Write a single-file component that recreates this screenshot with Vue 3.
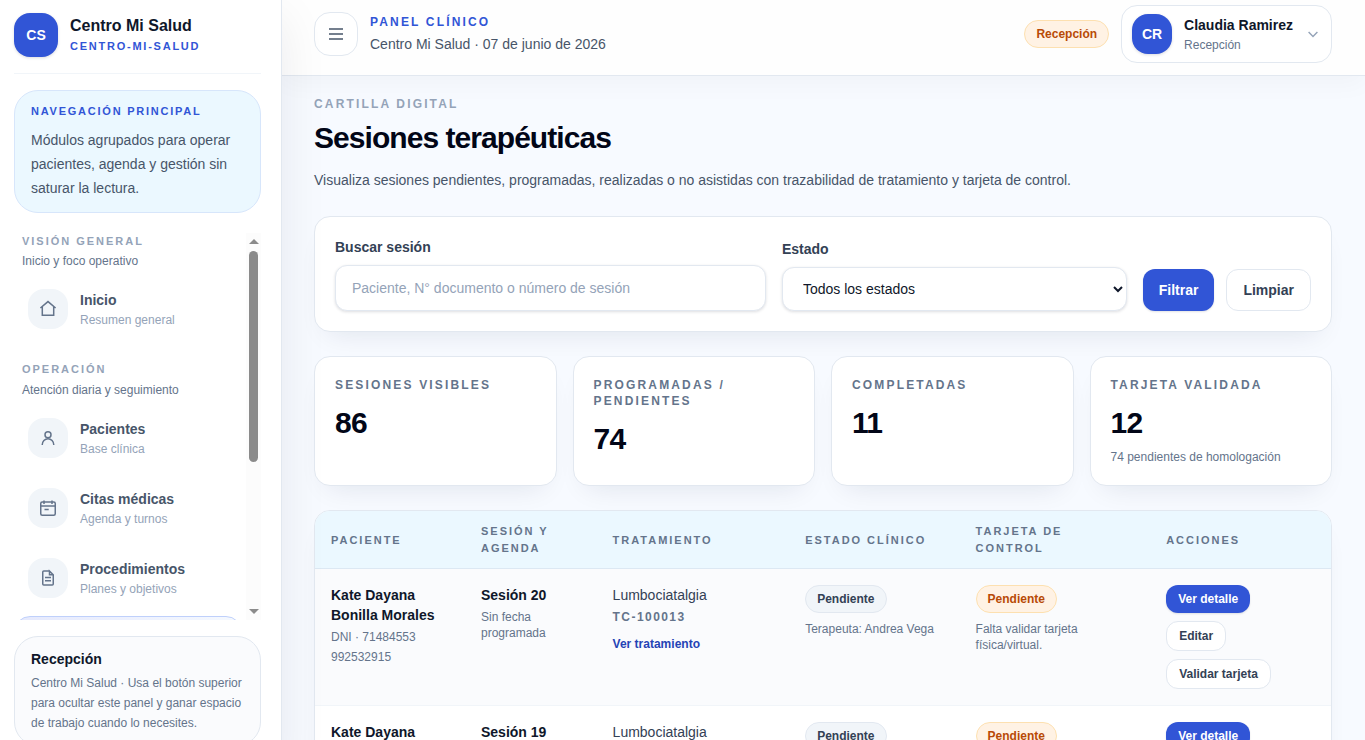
<template>
    <div class="layout">
        <aside class="sidebar">
            <div class="brand">
                <div class="brand-logo">CS</div>
                <div class="brand-text">
                    <div class="brand-name">Centro Mi Salud</div>
                    <div class="brand-slug">centro-mi-salud</div>
                </div>
            </div>
            
            <div class="nav-intro">
                <div class="nav-intro-title">Navegación principal</div>
                <p>Módulos agrupados para operar pacientes, agenda y gestión sin saturar la lectura.</p>
            </div>
            
            <div class="nav-wrapper">
                <nav class="nav">
                    <section v-for="group in navGroups" :key="group.title" class="nav-group">
                        <div class="nav-group-title">{{ group.title }}</div>
                        <div class="nav-group-text">{{ group.text }}</div>
                        <div class="nav-items">
                            <a v-for="item in group.items"
                               :key="item.name"
                               :class="['nav-item', { active: item.name === activeItem }]"
                               @click="activeItem = item.name"
                            >
                                <span class="nav-icon">
                                    <svg viewBox="0 0 20 20"><path :d="item.icon"/></svg>
                                </span>
                                <span v-if="item.name !== activeItem">
                                    <span class="nav-name">{{ item.name }}</span>
                                    <span class="nav-text">{{ item.text }}</span>
                                </span>
                            </a>
                        </div>
                    </section>
                </nav>
                <div class="scrollbar">
                    <i class="arrow-up"></i>
                    <div class="scroll-thumb"></div>
                    <i class="arrow-down"></i>
                </div>
            </div>
            
            <div class="sidebar-footer">
                <strong>Recepción</strong>
                <p>Centro Mi Salud · Usa el botón superior para ocultar este panel y ganar espacio de trabajo cuando lo necesites.</p>
            </div>
        </aside>
        
        <div class="main">
            <header class="topbar">
                <button class="menu-btn">
                    <svg viewBox="0 0 20 20"><path d="M3 5h14M3 10h14M3 15h14"/></svg>
                </button>
                <div class="topbar-title">
                    <div class="topbar-label">Panel clínico</div>
                    <div class="topbar-date">Centro Mi Salud · 07 de junio de 2026</div>
                </div>
                <span class="pill pill-warning">Recepción</span>
                <div class="user-card">
                    <div class="user-avatar">CR</div>
                    <div>
                        <div class="user-name">Claudia Ramirez</div>
                        <div class="user-role">Recepción</div>
                    </div>
                    <svg viewBox="0 0 20 20"><path d="m4.5 7.5 5.5 5.5 5.5-5.5"/></svg>
                </div>
            </header>
            
            <main class="content">
                <div class="page-label">Cartilla digital</div>
                <h1>Sesiones terapéuticas</h1>
                <p class="page-text">
                    Visualiza sesiones pendientes, programadas, realizadas o no asistidas con trazabilidad de tratamiento y tarjeta de control.
                </p>
                
                <form class="card filters" @submit.prevent>
                    <label>
                        Buscar sesión
                        <input v-model="search" type="text" placeholder="Paciente, N° documento o número de sesión"/>
                    </label>
                    <label>
                        Estado
                        <select v-model="status">
                            <option value="">Todos los estados</option>
                            <option value="pendiente">Pendiente</option>
                            <option value="programada">Programada</option>
                            <option value="realizada">Realizada</option>
                        </select>
                    </label>
                    <div class="filter-actions">
                        <button class="btn btn-primary">Filtrar</button>
                        <button type="button" class="btn btn-secondary" @click="clearFilters">Limpiar</button>
                    </div>
                </form>
                
                <div class="stats">
                    <div v-for="stat in stats" :key="stat.label" class="card stat">
                        <div class="stat-label">{{ stat.label }}</div>
                        <div class="stat-value">{{ stat.value }}</div>
                        <div v-if="stat.note" class="stat-note">{{ stat.note }}</div>
                    </div>
                </div>
                
                <div class="card table-card">
                    <table>
                        <colgroup>
                            <col class="col-patient"/>
                            <col class="col-session"/>
                            <col class="col-treatment"/>
                            <col class="col-status"/>
                            <col class="col-control"/>
                            <col/>
                        </colgroup>
                        <thead>
                            <tr>
                                <th>Paciente</th>
                                <th>Sesión y agenda</th>
                                <th>Tratamiento</th>
                                <th>Estado clínico</th>
                                <th>Tarjeta de control</th>
                                <th>Acciones</th>
                            </tr>
                        </thead>
                        <tbody>
                            <tr v-for="row in sessions" :key="row.number">
                                <td>
                                    <div class="strong">Kate Dayana Bonilla Morales</div>
                                    <div class="small">DNI · 71484553</div>
                                    <div class="small">992532915</div>
                                </td>
                                <td>
                                    <div class="strong">Sesión {{ row.number }}</div>
                                    <div class="small">Sin fecha programada</div>
                                </td>
                                <td>
                                    <div>Lumbociatalgia</div>
                                    <div class="small code">TC-100013</div>
                                    <a class="link">Ver tratamiento</a>
                                </td>
                                <td>
                                    <span class="pill">Pendiente</span>
                                    <div class="small under-pill">Terapeuta: Andrea Vega</div>
                                </td>
                                <td>
                                    <span class="pill pill-warning">Pendiente</span>
                                    <div class="small under-pill">Falta validar tarjeta física/virtual.</div>
                                </td>
                                <td>
                                    <div class="row-actions">
                                        <button class="btn btn-small btn-primary">Ver detalle</button>
                                        <button class="btn btn-small btn-secondary">Editar</button>
                                        <button class="btn btn-small btn-secondary">Validar tarjeta</button>
                                    </div>
                                </td>
                            </tr>
                        </tbody>
                    </table>
                </div>
            </main>
        </div>
    </div>
</template>

<script setup>
    import { ref } from 'vue';
    
    const search = ref('');
    const status = ref('');
    const activeItem = ref('Sesiones');
    
    // Menú lateral
    const docIcon = 'M11.5 3H5.75a1 1 0 0 0-1 1v12a1 1 0 0 0 1 1h8.5a1 1 0 0 0 1-1V6.75L11.5 3v3.75h3.75M7 9.5h6M7 12.7h6';
    
    const navGroups = [
        {
            title: 'Visión general',
            text: 'Inicio y foco operativo',
            items: [
                {name: 'Inicio', text: 'Resumen general', icon: 'M2.4 9 10 2.6 17.6 9M4.3 7.6v8.7h11.4V7.6'}
            ]
        },
        {
            title: 'Operación',
            text: 'Atención diaria y seguimiento',
            items: [
                {name: 'Pacientes', text: 'Base clínica', icon: 'M13 6.8a3 3 0 1 1-6 0 3 3 0 0 1 6 0M4.2 17a5.8 6.3 0 0 1 11.6 0'},
                {name: 'Citas médicas', text: 'Agenda y turnos', icon: 'M6 2.5V6M14 2.5V6M2.75 7.9h14.5M4.25 4h11.5a1.5 1.5 0 0 1 1.5 1.5v10.2a1.5 1.5 0 0 1-1.5 1.5H4.25a1.5 1.5 0 0 1-1.5-1.5V5.5a1.5 1.5 0 0 1 1.5-1.5M6.5 11.4h4.2'},
                {name: 'Procedimientos', text: 'Planes y objetivos', icon: docIcon},
                {name: 'Sesiones', text: 'Cartilla digital', icon: docIcon}
            ]
        }
    ];
    
    const stats = [
        {label: 'Sesiones visibles', value: 86},
        {label: 'Programadas / pendientes', value: 74},
        {label: 'Completadas', value: 11},
        {label: 'Tarjeta validada', value: 12, note: '74 pendientes de homologación'}
    ];
    
    const sessions = [
        {number: 20},
        {number: 19}
    ];
    
    const clearFilters = () => {
        search.value = '';
        status.value = '';
    };
</script>

<style>
    body {
        margin: 0;
        overflow: hidden;
    }
</style>

<style scoped>
    * {
        box-sizing: border-box;
    }
    
    .layout {
        display: flex;
        height: 740px;
        overflow: hidden;
        background: #f7faff;
        color: #334155;
        font-family: "Liberation Sans", Arial, sans-serif;
        font-size: 14px;
        line-height: 20px;
    }
    
    p, h1 {
        margin: 0;
    }
    
    button, input, select {
        font-family: inherit;
    }
    
    svg {
        display: block;
        width: 20px;
        height: 20px;
        fill: none;
        stroke: currentColor;
        stroke-width: 1.5;
    }
    
    /* Sidebar */
    .sidebar {
        position: relative;
        z-index: 2;
        display: flex;
        flex-direction: column;
        flex: 0 0 282px;
        height: 759px;
        padding: 13px 20px 13px 14px;
        border-right: 1px solid #e2e8f0;
        background: #fff;
        box-shadow: 0 18px 45px rgba(15, 23, 42, 0.08);
    }
    
    .brand {
        display: flex;
        align-items: center;
        gap: 12px;
        padding-bottom: 16px;
        border-bottom: 1px solid #f1f5f9;
    }
    
    .brand-logo,
    .user-avatar {
        display: flex;
        align-items: center;
        justify-content: center;
        border-radius: 16px;
        background: #3155d6;
        color: #fff;
        font-weight: 700;
        box-shadow: 0 1px 3px rgba(15, 23, 42, 0.15);
    }
    
    .brand-logo {
        width: 44px;
        height: 44px;
    }
    
    .brand-text {
        padding-bottom: 2px;
    }
    
    .brand-name {
        color: #0f172a;
        font-size: 16px;
        font-weight: 700;
        line-height: 24px;
    }
    
    .brand-slug,
    .nav-intro-title {
        color: #3155d6;
        font-size: 11px;
        font-weight: 700;
        line-height: 16.5px;
        letter-spacing: 1.76px;
        text-transform: uppercase;
    }
    
    .nav-intro {
        margin-top: 16px;
        padding: 12px 16px;
        border: 1px solid #d7e6fb;
        border-radius: 24px;
        background: #ebf8ff;
    }
    
    .nav-intro p {
        margin-top: 8px;
        color: #475569;
        line-height: 24px;
    }
    
    .nav-wrapper {
        display: flex;
        flex: 1;
        gap: 4px;
        min-height: 0;
        margin: 20px 0 16px;
    }
    
    .nav {
        flex: 1;
        overflow: hidden;
    }
    
    .nav-group + .nav-group {
        margin-top: 20px;
    }
    
    .nav-group-title {
        padding: 0 8px;
        color: #94a3b8;
        font-size: 11px;
        font-weight: 700;
        line-height: 16.5px;
        letter-spacing: 1.98px;
        text-transform: uppercase;
    }
    
    .nav-group-text {
        margin: 4px 0 8px;
        padding: 0 8px;
        color: #64748b;
        font-size: 12px;
        line-height: 16px;
    }
    
    .nav-items {
        display: flex;
        flex-direction: column;
        gap: 6px;
    }
    
    .nav-item {
        display: flex;
        align-items: center;
        gap: 12px;
        padding: 11px 13px;
        border: 1px solid transparent;
        border-radius: 16px;
        cursor: pointer;
    }
    
    .nav-item.active {
        border-color: #bfd0fb;
        background: linear-gradient(90deg, #e5e9fd, #f5f9ff);
    }
    
    .nav-icon {
        display: flex;
        align-items: center;
        justify-content: center;
        width: 40px;
        height: 40px;
        border-radius: 16px;
        background: #f1f5f9;
        color: #64748b;
    }
    
    .nav-name,
    .nav-text {
        display: block;
    }
    
    .nav-name {
        color: #475569;
        font-weight: 700;
    }
    
    .nav-text {
        margin-top: 2px;
        color: #94a3b8;
        font-size: 12px;
        line-height: 16px;
    }
    
    .scrollbar {
        display: flex;
        flex-direction: column;
        align-items: center;
        width: 15px;
        padding: 6px 0;
        background: #fcfcfc;
    }
    
    .arrow-up,
    .arrow-down {
        border: 5px solid transparent;
    }
    
    .arrow-up {
        border-top: 0;
        border-bottom-color: #8b8b8b;
    }
    
    .arrow-down {
        margin-top: auto;
        border-bottom: 0;
        border-top-color: #8b8b8b;
    }
    
    .scroll-thumb {
        width: 9px;
        height: 211px;
        margin-top: 7px;
        border-radius: 5px;
        background: #8b8b8b;
    }
    
    .sidebar-footer {
        padding: 12px 16px;
        border: 1px solid #e2e8f0;
        border-radius: 24px;
        background: #fafbfd;
    }
    
    .sidebar-footer strong {
        color: #0f172a;
    }
    
    .sidebar-footer p {
        margin-top: 4px;
        color: #64748b;
        font-size: 12px;
    }
    
    /* Topbar */
    .main {
        flex: 1;
        min-width: 0;
    }
    
    .topbar {
        display: flex;
        align-items: center;
        gap: 12px;
        height: 76px;
        padding: 5px 33px 12px 32px;
        border-bottom: 1px solid #e2e8f0;
        background: #fefefe;
        box-shadow: 0 8px 24px rgba(15, 23, 42, 0.03);
    }
    
    .menu-btn {
        display: flex;
        align-items: center;
        justify-content: center;
        width: 44px;
        height: 44px;
        padding: 0;
        border: 1px solid #e2e8f0;
        border-radius: 16px;
        background: #fff;
        color: #475569;
    }
    
    .topbar-title {
        flex: 1;
    }
    
    .topbar-label {
        color: #3155d6;
        font-size: 12px;
        font-weight: 700;
        line-height: 16px;
        letter-spacing: 2.16px;
        text-transform: uppercase;
    }
    
    .topbar-date {
        margin-top: 4px;
        color: #475569;
    }
    
    .pill {
        display: inline-block;
        padding: 5px 11px;
        border: 1px solid #e2e8f0;
        border-radius: 14px;
        background: #f1f5f9;
        color: #334155;
        font-size: 12px;
        font-weight: 700;
        line-height: 16px;
        vertical-align: top;
    }
    
    .pill-warning {
        border-color: #fde0b0;
        background: #fff2e4;
        color: #b84a06;
    }
    
    .user-card {
        display: flex;
        align-items: center;
        gap: 12px;
        height: 58px;
        padding: 0 10px;
        border: 1px solid #e2e8f0;
        border-radius: 16px;
        background: #fff;
    }
    
    .user-card svg {
        width: 16px;
        height: 16px;
        color: #94a3b8;
        stroke-width: 1.8;
    }
    
    .user-avatar {
        width: 40px;
        height: 40px;
    }
    
    .user-name {
        color: #0f172a;
        font-weight: 700;
    }
    
    .user-role {
        margin-top: 2px;
        color: #64748b;
        font-size: 12px;
        line-height: 16px;
    }
    
    /* Content */
    .content {
        padding: 20px 33px 0 32px;
    }
    
    .page-label {
        color: #94a3b8;
        font-size: 12px;
        font-weight: 700;
        line-height: 16px;
        letter-spacing: 2.16px;
        text-transform: uppercase;
    }
    
    h1 {
        margin-top: 8px;
        color: #020617;
        font-size: 30px;
        line-height: 36px;
        letter-spacing: -0.95px;
    }
    
    .page-text {
        margin-top: 12px;
        color: #475569;
        line-height: 24px;
    }
    
    .card {
        border: 1px solid #e2e8f0;
        border-radius: 16px;
        background: #fff;
        box-shadow: 0 14px 28px -14px rgba(15, 23, 60, 0.11);
    }
    
    .filters {
        display: grid;
        grid-template-columns: minmax(0, 1.25fr) minmax(0, 1fr) auto;
        align-items: end;
        gap: 16px;
        margin-top: 24px;
        padding: 20px;
    }
    
    .filters label {
        color: #334155;
        font-weight: 700;
    }
    
    .filters input,
    .filters select {
        display: block;
        width: 100%;
        height: 46px;
        margin-top: 8px;
        padding: 0 16px;
        border: 1px solid #e2e8f0;
        border-radius: 12px;
        background: #fff;
        color: #0f172a;
        font-size: 14px;
        box-shadow: 0 1px 3px rgba(15, 23, 42, 0.14);
    }
    
    .filters select {
        height: 44px;
    }
    
    .filters input::placeholder {
        color: #94a3b8;
    }
    
    .filter-actions {
        display: flex;
        gap: 12px;
    }
    
    .btn {
        padding: 10px 16px;
        border: 1px solid #e2e8f0;
        border-radius: 12px;
        font-size: 14px;
        font-weight: 700;
        line-height: 20px;
        cursor: pointer;
    }
    
    .btn-primary {
        padding: 11px 16px;
        border: 0;
        background: #3155d6;
        color: #fff;
        box-shadow: 0 1px 2px rgba(15, 23, 42, 0.12);
    }
    
    .btn-secondary {
        background: #fff;
        color: #334155;
    }
    
    .stats {
        display: grid;
        grid-template-columns: repeat(4, minmax(0, 1fr));
        gap: 16px;
        margin-top: 24px;
    }
    
    .stat {
        padding: 20px;
    }
    
    .stat-label {
        color: #64748b;
        font-size: 12px;
        font-weight: 700;
        line-height: 16px;
        letter-spacing: 2.16px;
        text-transform: uppercase;
    }
    
    .stat-value {
        margin-top: 12px;
        color: #020617;
        font-size: 30px;
        font-weight: 700;
        line-height: 36px;
        letter-spacing: -0.75px;
    }
    
    .stat-note {
        margin-top: 8px;
        color: #64748b;
        font-size: 12px;
        line-height: 16px;
    }
    
    /* Table */
    .table-card {
        margin-top: 24px;
        overflow: hidden;
    }
    
    table {
        width: 100%;
        border-collapse: separate;
        border-spacing: 0;
        table-layout: fixed;
    }
    
    .col-patient {
        width: 150px;
    }
    
    .col-session {
        width: 131.6px;
    }
    
    .col-treatment {
        width: 192.6px;
    }
    
    .col-status {
        width: 170.4px;
    }
    
    .col-control {
        width: 190.6px;
    }
    
    th {
        padding: 12.4px 16px 11.6px;
        border-bottom: 1px solid #dce8f3;
        background: #ebf8ff;
        color: #64748b;
        font-size: 11px;
        line-height: 16.5px;
        letter-spacing: 1.98px;
        text-align: left;
        text-transform: uppercase;
    }
    
    td {
        padding: 16px;
        border-bottom: 1px solid #f1f5f9;
        vertical-align: top;
    }
    
    tbody tr:first-child td {
        background: #fafbfd;
    }
    
    .strong {
        color: #0f172a;
        font-weight: 700;
    }
    
    .small {
        margin-top: 4px;
        color: #64748b;
        font-size: 12px;
        line-height: 16px;
    }
    
    .code {
        font-weight: 700;
        letter-spacing: 1.44px;
    }
    
    .link {
        display: block;
        margin-top: 11px;
        color: #2443b5;
        font-size: 12px;
        font-weight: 700;
        line-height: 16px;
    }
    
    .under-pill {
        margin-top: 8px;
    }
    
    .row-actions {
        display: flex;
        flex-direction: column;
        align-items: flex-start;
        gap: 8px;
    }
    
    .btn-small {
        padding: 6px 12px;
        font-size: 12px;
        line-height: 16px;
    }
</style>
